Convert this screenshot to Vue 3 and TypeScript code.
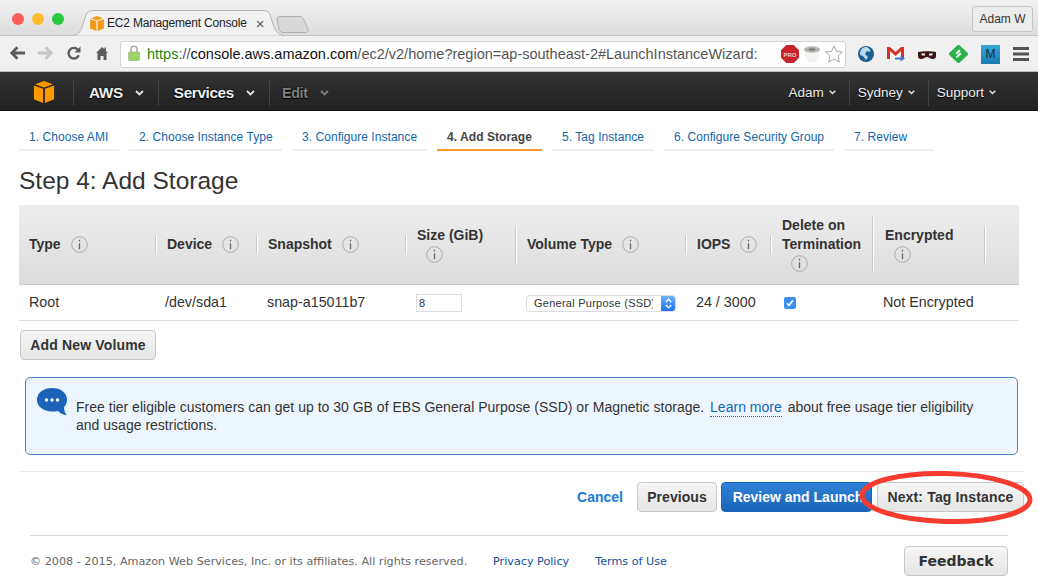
<script setup lang="ts">
const steps = [
  { label: '1. Choose AMI', width: 100 },
  { label: '2. Choose Instance Type', width: 153 },
  { label: '3. Configure Instance', width: 135 },
  { label: '4. Add Storage', width: 105, active: true },
  { label: '5. Tag Instance', width: 102 },
  { label: '6. Configure Security Group', width: 170 },
  { label: '7. Review', width: 90 },
]
const heads = [
  { lines: ['Type'], cls: 'one' },
  { lines: ['Device'], cls: 'one' },
  { lines: ['Snapshot'], cls: 'one' },
  { lines: ['Size (GiB)'], cls: 'two' },
  { lines: ['Volume Type'], cls: 'one' },
  { lines: ['IOPS'], cls: 'one' },
  { lines: ['Delete on', 'Termination'], cls: 'three' },
  { lines: ['Encrypted'], cls: 'two' },
]
</script>

<template>
  <div class="screen">
    <header class="tabstrip">
      <div class="lights"><i class="red"></i><i class="amber"></i><i class="green"></i></div>
      <div class="tab">
        <svg class="tab-shape" width="211" height="26" viewBox="0 0 211 26">
          <path d="M0 25.500C5 25 7 22 9 17L13 5C14 2 16 .5 20 .5L190 .5C194 .5 196 2 197 5L201 17C203 22 206 25 211 25.500" fill="#f1f1f1" stroke="#b4b4b4"/>
        </svg>
        <svg class="tab-cube" width="14" height="15" viewBox="0 0 22 24"><path d="M0 5 10 8.500V24L0 20zM22 5 12 8.500V24l10-4zM1.500 3.500 11 0l9.500 3.500L11 7z" fill="#f39a1a"/></svg>
        <span class="tab-title">EC2 Management Console</span>
        <span class="tab-close">×</span>
      </div>
      <svg class="ghost" width="33" height="17" viewBox="0 0 33 17"><path d="M1 3C1 1.500 2 .5 4 .5L24 .5C26 .5 27 1.500 28 4L32 13C32.500 15 32 16.500 30 16.500L7 16.500C5 16.500 4 15.500 3 13.500Z" fill="#d8d8d8" stroke="#b0b0b0"/></svg>
      <div class="profile">Adam W</div>
    </header>

    <div class="toolbar">
      <div class="nav-icons">
        <svg width="15" height="14" viewBox="0 0 15 14"><path d="M7.500 1.200 1.800 7l5.700 5.800M2 7H15" fill="none" stroke="#5c5c5c" stroke-width="2.800"/></svg>
        <svg width="15" height="14" viewBox="0 0 15 14"><path d="M7.500 1.200 13.200 7l-5.700 5.800M13 7H0" fill="none" stroke="#c6c6c6" stroke-width="2.800"/></svg>
        <svg width="14" height="14" viewBox="0 0 14 14"><path d="M11.800 9.300A5.300 5.300 0 1 1 11 3.800" fill="none" stroke="#5c5c5c" stroke-width="2.400"/><path d="M13.500 .5v6h-6z" fill="#5c5c5c"/></svg>
        <svg width="12" height="14" viewBox="0 0 12 14"><path d="M6 1 0 7h1.500v7h3v-4h3v4h3V7H12l-2-2V1.500H8.500V3.200z" fill="#5c5c5c"/></svg>
      </div>
      <div class="omnibox">
        <svg class="lock" width="12" height="16" viewBox="0 0 12 16"><path d="M3 8V4.200a3 3 0 0 1 6 0V8" fill="none" stroke="#a9a9a9" stroke-width="1.500"/><rect x=".5" y="7" width="11" height="8.500" rx="1" fill="#9ed36b" stroke="#86b85a" stroke-width=".6"/></svg>
        <span class="url"><span class="https">https</span><span class="dim">://</span><span class="host">console.aws.amazon.com</span><span class="dim">/ec2/v2/home?region=ap-southeast-2#LaunchInstanceWizard:</span></span>
        <div class="omni-ext">
          <svg width="18" height="18" viewBox="0 0 18 18"><path d="M5.300 0h7.400L18 5.300v7.400L12.700 18H5.300L0 12.700V5.300z" fill="#c8232c"/><text x="9" y="11.800" text-anchor="middle" class="pro">PRO</text></svg>
          <svg width="16" height="16" viewBox="0 0 16 16"><path d="M0 3h16l-1.500 10c-.3 2-2 3-6.500 3s-6.200-1-6.500-3z" fill="#f4f4f1"/><ellipse cx="8" cy="3.500" rx="8" ry="3.200" fill="#b5b5b0"/><ellipse cx="8" cy="3.500" rx="3.500" ry="1.300" fill="#7d7d7a"/></svg>
          <svg width="18" height="18" viewBox="0 0 18 18"><path d="M9 .8l2.500 5.500 6 .7-4.400 4 1.200 6L9 14l-5.300 3 1.200-6L.5 7l6-.7z" fill="#fff" stroke="#a8a8a8"/></svg>
        </div>
      </div>
      <div class="ext">
        <svg width="16" height="16" viewBox="0 0 16 16"><circle cx="8" cy="8" r="8" fill="#1c5f92"/><path d="M7 1c3 0 6 2 5 5L9 5 7 8l3 3-2 3-3-4-3-1c0-4 1-7 5-8z" fill="#bcd9ec"/></svg>
        <svg width="18" height="16" viewBox="0 0 18 16"><rect y="1" width="17" height="12" fill="#f6f6f6"/><path d="M0 1h3l5.500 5L14 1h3v12h-3V5L8.500 10 3 5v8H0z" fill="#d93025"/><path d="M8 11.500h5.500V9.500l4.500 3-4.500 3v-2H8z" fill="#3d78c9"/></svg>
        <svg width="18" height="18" viewBox="0 0 18 18"><path d="M4 0h8l3 3v5H4z" fill="#f2f2f2"/><rect x="4" y="14" width="11" height="4" fill="#f2f2f2"/><path d="M0 7c4-1 14-1 18 0v4c0 2-1 3-3 3-3 0-4-2-6-2s-3 2-6 2c-2 0-3-1-3-3z" fill="#3a1414"/><path d="M3 8.500h4v2H4zM11 8.500h4l-1 2h-3z" fill="#f3f3f3"/></svg>
        <svg width="19" height="18" viewBox="0 0 19 18"><path d="M8.200.5a2 2 0 0 1 2.600 0l7.700 7.200a2 2 0 0 1 0 2.600l-7.700 7.200a2 2 0 0 1-2.600 0L.5 10.300a2 2 0 0 1 0-2.600z" fill="#2bb24c"/><path d="M10 4.500l1.500 1.500L8 9.500 6.500 8zM11 7.500 12.500 9 9.500 12 8 10.500zM9 12l-1 1-1.300-1.300 1-1z" fill="#fff"/></svg>
        <div class="m-icon">M</div>
        <svg width="16" height="14" viewBox="0 0 16 14"><path d="M0 0h16v3H0zM0 5.500h16v3H0zM0 11h16v3H0z" fill="#555"/></svg>
      </div>
    </div>

    <nav class="awsnav">
      <div class="nav-left">
        <svg class="cube" width="22" height="22" viewBox="0 0 22 24"><path d="M0 5 10 8.500V24L0 20zM22 5 12 8.500V24l10-4zM1.500 3.500 11 0l9.500 3.500L11 7z" fill="#f90"/></svg>
        <div class="nav-item"><b>AWS</b><svg class="chev" width="9" height="6" viewBox="0 0 9 6"><path d="M1 1l3.500 3.500L8 1" fill="none" stroke="#e4e4e4" stroke-width="1.800"/></svg></div>
        <div class="nav-item"><b>Services</b><svg class="chev" width="9" height="6" viewBox="0 0 9 6"><path d="M1 1l3.500 3.500L8 1" fill="none" stroke="#e4e4e4" stroke-width="1.800"/></svg></div>
        <div class="nav-item off"><b>Edit</b><svg class="chev" width="9" height="6" viewBox="0 0 9 6"><path d="M1 1l3.500 3.500L8 1" fill="none" stroke="#7c7c7c" stroke-width="1.800"/></svg></div>
      </div>
      <div class="nav-right">
        <div class="r-item"><span>Adam</span><svg width="7" height="5" viewBox="0 0 7 5"><path d="M.7.7 3.500 3.500 6.300.7" fill="none" stroke="#e4e4e4" stroke-width="1.500"/></svg></div>
        <div class="r-item"><span>Sydney</span><svg width="7" height="5" viewBox="0 0 7 5"><path d="M.7.7 3.500 3.500 6.300.7" fill="none" stroke="#e4e4e4" stroke-width="1.500"/></svg></div>
        <div class="r-item"><span>Support</span><svg width="7" height="5" viewBox="0 0 7 5"><path d="M.7.7 3.500 3.500 6.300.7" fill="none" stroke="#e4e4e4" stroke-width="1.500"/></svg></div>
      </div>
    </nav>

    <main class="page">
      <ul class="steps">
        <li v-for="s in steps" :key="s.label" :class="{ active: s.active }" :style="{ width: s.width + 'px' }">{{ s.label }}</li>
      </ul>
      <h1>Step 4: Add Storage</h1>

      <section class="table">
        <div class="thead">
          <div v-for="h in heads" :key="h.lines[0]" class="th">
            <div class="th-in" :class="h.cls">
              <div v-if="h.cls === 'one'" class="th-line">
                <span>{{ h.lines[0] }}</span>
                <svg class="info" width="17" height="17" viewBox="0 0 17 17"><circle cx="8.500" cy="8.500" r="7.800" fill="none" stroke="#aaa" stroke-width="1"/><path d="M8.500 3.800v1.800M8.500 7.200v6" stroke="#666" stroke-width="1.300"/></svg>
              </div>
              <template v-else>
                <div v-for="l in h.lines" :key="l" class="th-text">{{ l }}</div>
                <svg class="info under" width="17" height="17" viewBox="0 0 17 17"><circle cx="8.500" cy="8.500" r="7.800" fill="none" stroke="#aaa" stroke-width="1"/><path d="M8.500 3.800v1.800M8.500 7.200v6" stroke="#666" stroke-width="1.300"/></svg>
              </template>
            </div>
          </div>
          <div class="th-end"></div>
        </div>
        <div class="tr">
          <div class="td first">Root</div>
          <div class="td">/dev/sda1</div>
          <div class="td">snap-a15011b7</div>
          <div class="td"><div class="input">8</div></div>
          <div class="td">
            <div class="select"><span class="sel-text">General Purpose (SSD)</span>
              <span class="sel-btn"><svg width="7" height="11" viewBox="0 0 7 11"><path d="M.8 4 3.500 1.200 6.200 4M.8 7l2.700 2.800L6.200 7" fill="none" stroke="#fff" stroke-width="1.300"/></svg></span>
            </div>
          </div>
          <div class="td">24 / 3000</div>
          <div class="td"><span class="check"><svg width="12" height="12" viewBox="0 0 12 12"><path d="M3 6.200 5 8.500 9 3.300" fill="none" stroke="#fff" stroke-width="1.700"/></svg></span></div>
          <div class="td enc">Not Encrypted</div>
          <div class="td"></div>
        </div>
      </section>

      <button class="btn add">Add New Volume</button>

      <div class="notice">
        <svg class="bubble" width="31" height="28" viewBox="0 0 31 28"><path d="M15 0c8.500 0 15 4.800 15 11.500 0 3-1 5.500-3 7.500 0 3 .8 6 3 8-3.500 0-6.500-1.500-9-4-2 .4-4 .5-6 .5C6.500 23.500 0 18.500 0 11.800 0 4.800 6.500 0 15 0z" fill="#1a63b8"/><circle cx="9.500" cy="12" r="1.700" fill="#fff"/><circle cx="15" cy="12" r="1.700" fill="#fff"/><circle cx="20.500" cy="12" r="1.700" fill="#fff"/></svg>
        <p>Free tier eligible customers can get up to 30 GB of EBS General Purpose (SSD) or Magnetic storage. <a>Learn more</a> about free usage tier eligibility and usage restrictions.</p>
      </div>

      <div class="actions">
        <a class="cancel">Cancel</a>
        <button class="btn prev">Previous</button>
        <button class="btn primary">Review and Launch</button>
        <button class="btn next">Next: Tag Instance</button>
        <svg class="circle" width="180" height="58" viewBox="0 0 180 58"><ellipse cx="89" cy="29.500" rx="84" ry="24" transform="rotate(1.500 89 29.500)" fill="none" stroke="#f73b2f" stroke-width="5"/></svg>
      </div>

      <footer class="foot">
        <span class="copy">© 2008 - 2015, Amazon Web Services, Inc. or its affiliates. All rights reserved.</span>
        <a>Privacy Policy</a>
        <a>Terms of Use</a>
        <button class="btn feedback">Feedback</button>
      </footer>
    </main>
  </div>
</template>

<style>
html, body { margin: 0; background: #fff; overflow: hidden; }
</style>

<style scoped>
.screen { width: 1038px; height: 586px; overflow: hidden; font-family: "Liberation Sans", Arial, sans-serif; color: #333; background: #fff; }
.tabstrip { height: 36px; box-sizing: border-box; display: flex; align-items: flex-start; position: relative; background: linear-gradient(#f2f2f2, #dcdcdc); border-bottom: 1px solid #c4c4c4; }
.lights { display: flex; gap: 8px; padding: 13px 0 0 12px; width: 64px; box-sizing: border-box; }
.lights i { display: block; width: 12px; height: 12px; border-radius: 50%; }
.red { background: #fb5d57; } .amber { background: #fdbd2e; } .green { background: #27c93f; }
.tab { position: relative; margin: 10px 0 0 9px; width: 204px; height: 26px; display: flex; align-items: center; padding-left: 17px; box-sizing: border-box; z-index: 1; }
.tab-shape { position: absolute; left: 0; top: 0; }
.tab-cube, .tab-title, .tab-close { position: relative; flex: none; }
.tab-title { font-size: 12px; margin-left: 3px; color: #222; white-space: nowrap; letter-spacing: -.2px; }
.tab-close { margin-left: 9px; font-size: 15px; color: #555; }
.ghost { margin: 16px 0 0 -1px; }
.profile { position: absolute; right: 5px; top: 6px; width: 61px; height: 26px; box-sizing: border-box; border: 1px solid #c4c4c4; border-radius: 3px; background: #ececec; font-size: 12px; line-height: 24px; text-align: center; color: #333; }

.toolbar { height: 36px; box-sizing: border-box; display: flex; align-items: center; background: #f0f0f0; border-bottom: 1px solid #bdbdbd; }
.nav-icons { width: 120px; padding-left: 10px; box-sizing: border-box; display: flex; align-items: center; margin-top: -1px; }
.nav-icons svg:nth-child(2) { margin-left: 13px; }
.nav-icons svg:nth-child(3) { margin-left: 14px; }
.nav-icons svg:nth-child(4) { margin-left: 15px; }
.omnibox { width: 726px; height: 27px; flex: none; box-sizing: border-box; background: #fff; border: 1px solid #d4d4d4; border-radius: 3px; display: flex; align-items: center; padding-left: 7px; margin-top: 1px; position: relative; }
.lock { flex: none; margin-top: -2px; }
.url { margin-left: 7px; font-size: 14.5px; color: #555; white-space: nowrap; }
.https { color: #1a8a0e; } .host { color: #111; } .dim { color: #555; }
.omni-ext { margin-left: auto; display: flex; align-items: center; gap: 5px; padding-right: 2px; }
.omni-ext svg { flex: none; }
.pro { font: bold 6px "Liberation Sans", Arial, sans-serif; fill: #f5c9c9; }
.ext { flex: 1; display: flex; align-items: center; justify-content: space-between; padding: 0 9px 0 12px; margin-top: 1px; }
.m-icon { width: 19px; height: 19px; background: linear-gradient(#35a6d8, #1a7cb2); color: #1c2b38; font-size: 12px; line-height: 19px; text-align: center; }

.awsnav { height: 39px; box-sizing: border-box; padding-top: 3px; display: flex; justify-content: space-between; background: linear-gradient(#333, #222); border-bottom: 1px solid #111; color: #eee; }
.nav-left { display: flex; align-items: center; padding-left: 33px; }
.cube { margin-right: 18px; margin-top: -2px; flex: none; }
.nav-item { height: 26px; border-left: 1px solid #444; padding: 0 14px 0 15px; display: flex; align-items: center; gap: 12px; }
.nav-item b { font-size: 15.300px; letter-spacing: -.35px; text-shadow: 0 0 2px #000, 0 1px 1px #000; }
.off { color: #808080; padding-left: 12px; }
.off b { font-size: 14.300px; letter-spacing: -.3px; }
.nav-right { display: flex; align-items: center; padding-right: 42px; }
.r-item { height: 26px; display: flex; align-items: center; gap: 5px; padding: 0 13px 0 8px; font-size: 13.500px; border-left: 1px solid #444; text-shadow: 0 1px 1px #000; }
.r-item:first-child { border-left: 0; }
.r-item:last-child { padding-right: 0; }

.page { padding: 0 0 0 19px; }
.steps { list-style: none; margin: 0; padding: 14px 0 0; display: flex; gap: 10px; }
.steps li { box-sizing: border-box; height: 26px; border-bottom: 2px solid #efefef; padding: 4px 0 0 10px; font-size: 12px; letter-spacing: .05px; line-height: 16px; color: #1166aa; white-space: nowrap; }
.steps li.active { color: #444; font-weight: bold; border-bottom-color: #f7972d; }
h1 { margin: 0; padding-top: 16px; height: 38px; font-weight: 400; font-size: 24.500px; line-height: 28px; color: #333; }

.table { width: 1000px; }
.thead { height: 80px; box-sizing: border-box; display: grid; grid-template-columns: 137px 101px 149px 110px 170px 85px 102px 112px 34px; align-items: center; background: linear-gradient(#eeeeee, #dcdcdc); border-bottom: 1px solid #c8c8c8; }
.th { display: flex; align-items: center; }
.th-in { flex: 1; box-sizing: border-box; padding-left: 11px; border-right: 1px solid #c9c9c9; box-shadow: 1px 0 0 #fff; font-weight: bold; font-size: 14px; line-height: 19px; color: #333; white-space: nowrap; }
.th:first-child .th-in { padding-left: 10px; }
.th:nth-child(8) .th-in { padding-left: 12px; }
.th-in.one { height: 19px; }
.th-in.two { height: 38px; }
.th-in.three { height: 57px; }
.th-line { display: flex; align-items: center; gap: 10px; }
.info { display: block; flex: none; }
.under { margin: 1px 0 0 9px; }
.tr { height: 36px; box-sizing: border-box; padding-bottom: 2px; display: grid; grid-template-columns: 137px 101px 149px 110px 170px 85px 102px 112px 34px; align-items: center; border-bottom: 1px solid #ddd; font-size: 14.300px; color: #333; }
.td { padding-left: 10px; white-space: nowrap; }
.td:nth-child(2) { padding-left: 9px; }
.td.first { padding-left: 10px; }
.input { width: 46px; height: 18px; box-sizing: border-box; border: 1px solid #ddd; font-size: 11px; line-height: 17px; padding-left: 2px; margin-top: 2px; }
.select { width: 150px; height: 17px; box-sizing: border-box; border: 1px solid #ddd; border-radius: 4px; display: flex; margin-top: 3px; overflow: hidden; font-size: 11px; line-height: 15px; color: #333; background: #fff; }
.sel-text { flex: 1; overflow: hidden; margin: 0 8px 0 7px; letter-spacing: .25px; }
.sel-btn { width: 14px; flex: none; background: linear-gradient(#6cb3fa, #1a72f0); display: flex; align-items: center; justify-content: center; }
.check { display: block; width: 12px; height: 12px; margin: 2px 0 0 3px; border-radius: 2px; background: #3b8ff3; }
.check svg { display: block; }

.btn { display: block; box-sizing: border-box; height: 30px; border: 1px solid #c8c8c8; border-radius: 4px; background: linear-gradient(#f6f6f6, #e4e4e4); font: bold 14px "Liberation Sans", Arial, sans-serif; letter-spacing: .15px; color: #333; padding: 0; white-space: nowrap; }
.add { width: 136px; margin: 9px 0 0 1px; }
.notice { width: 993px; height: 78px; box-sizing: border-box; margin: 17px 0 0 6px; border: 1px solid #4a80c8; border-radius: 5px; background: #edf6fe; display: flex; padding: 10px 0 0 11px; }
.bubble { flex: none; }
.notice p { margin: 10px 0 0 8px; width: 905px; font-size: 14px; line-height: 18px; letter-spacing: .01px; color: #333; }
.notice a { color: #1166bb; margin: 0 2px; border-bottom: 1px dotted #1166bb; padding-bottom: 1px; }
.actions { position: relative; width: 1005px; height: 64px; box-sizing: border-box; margin-top: 16px; border-top: 1px solid #eaeaea; display: flex; align-items: flex-start; justify-content: flex-end; padding-top: 10px; }
.cancel { color: #1a7ad8; font-weight: bold; font-size: 14px; margin: 7px 14px 0 0; }
.actions .prev { width: 80px; letter-spacing: .05px; }
.actions .primary { width: 151px; margin-left: 4px; padding-left: 3px; background: linear-gradient(#2f83d8, #1a63b8); color: #fff; border-color: #1a63b8; letter-spacing: 0; }
.actions .next { width: 147px; margin-left: 5px; }
.circle { position: absolute; right: -13px; top: -4px; }
.foot { margin-left: 11px; width: 978px; height: 50px; border-top: 1px solid #d8d8d8; display: flex; align-items: center; font-family: "DejaVu Sans", Verdana, sans-serif; font-size: 11.200px; }
.copy { color: #666; width: 463px; }
.foot a { color: #114f9c; margin: 1px 26px 0 0; }
.feedback { margin-left: auto; width: 104px; font: bold 14px "DejaVu Sans", Verdana, sans-serif; letter-spacing: 0; margin-top: -1px; }
</style>
